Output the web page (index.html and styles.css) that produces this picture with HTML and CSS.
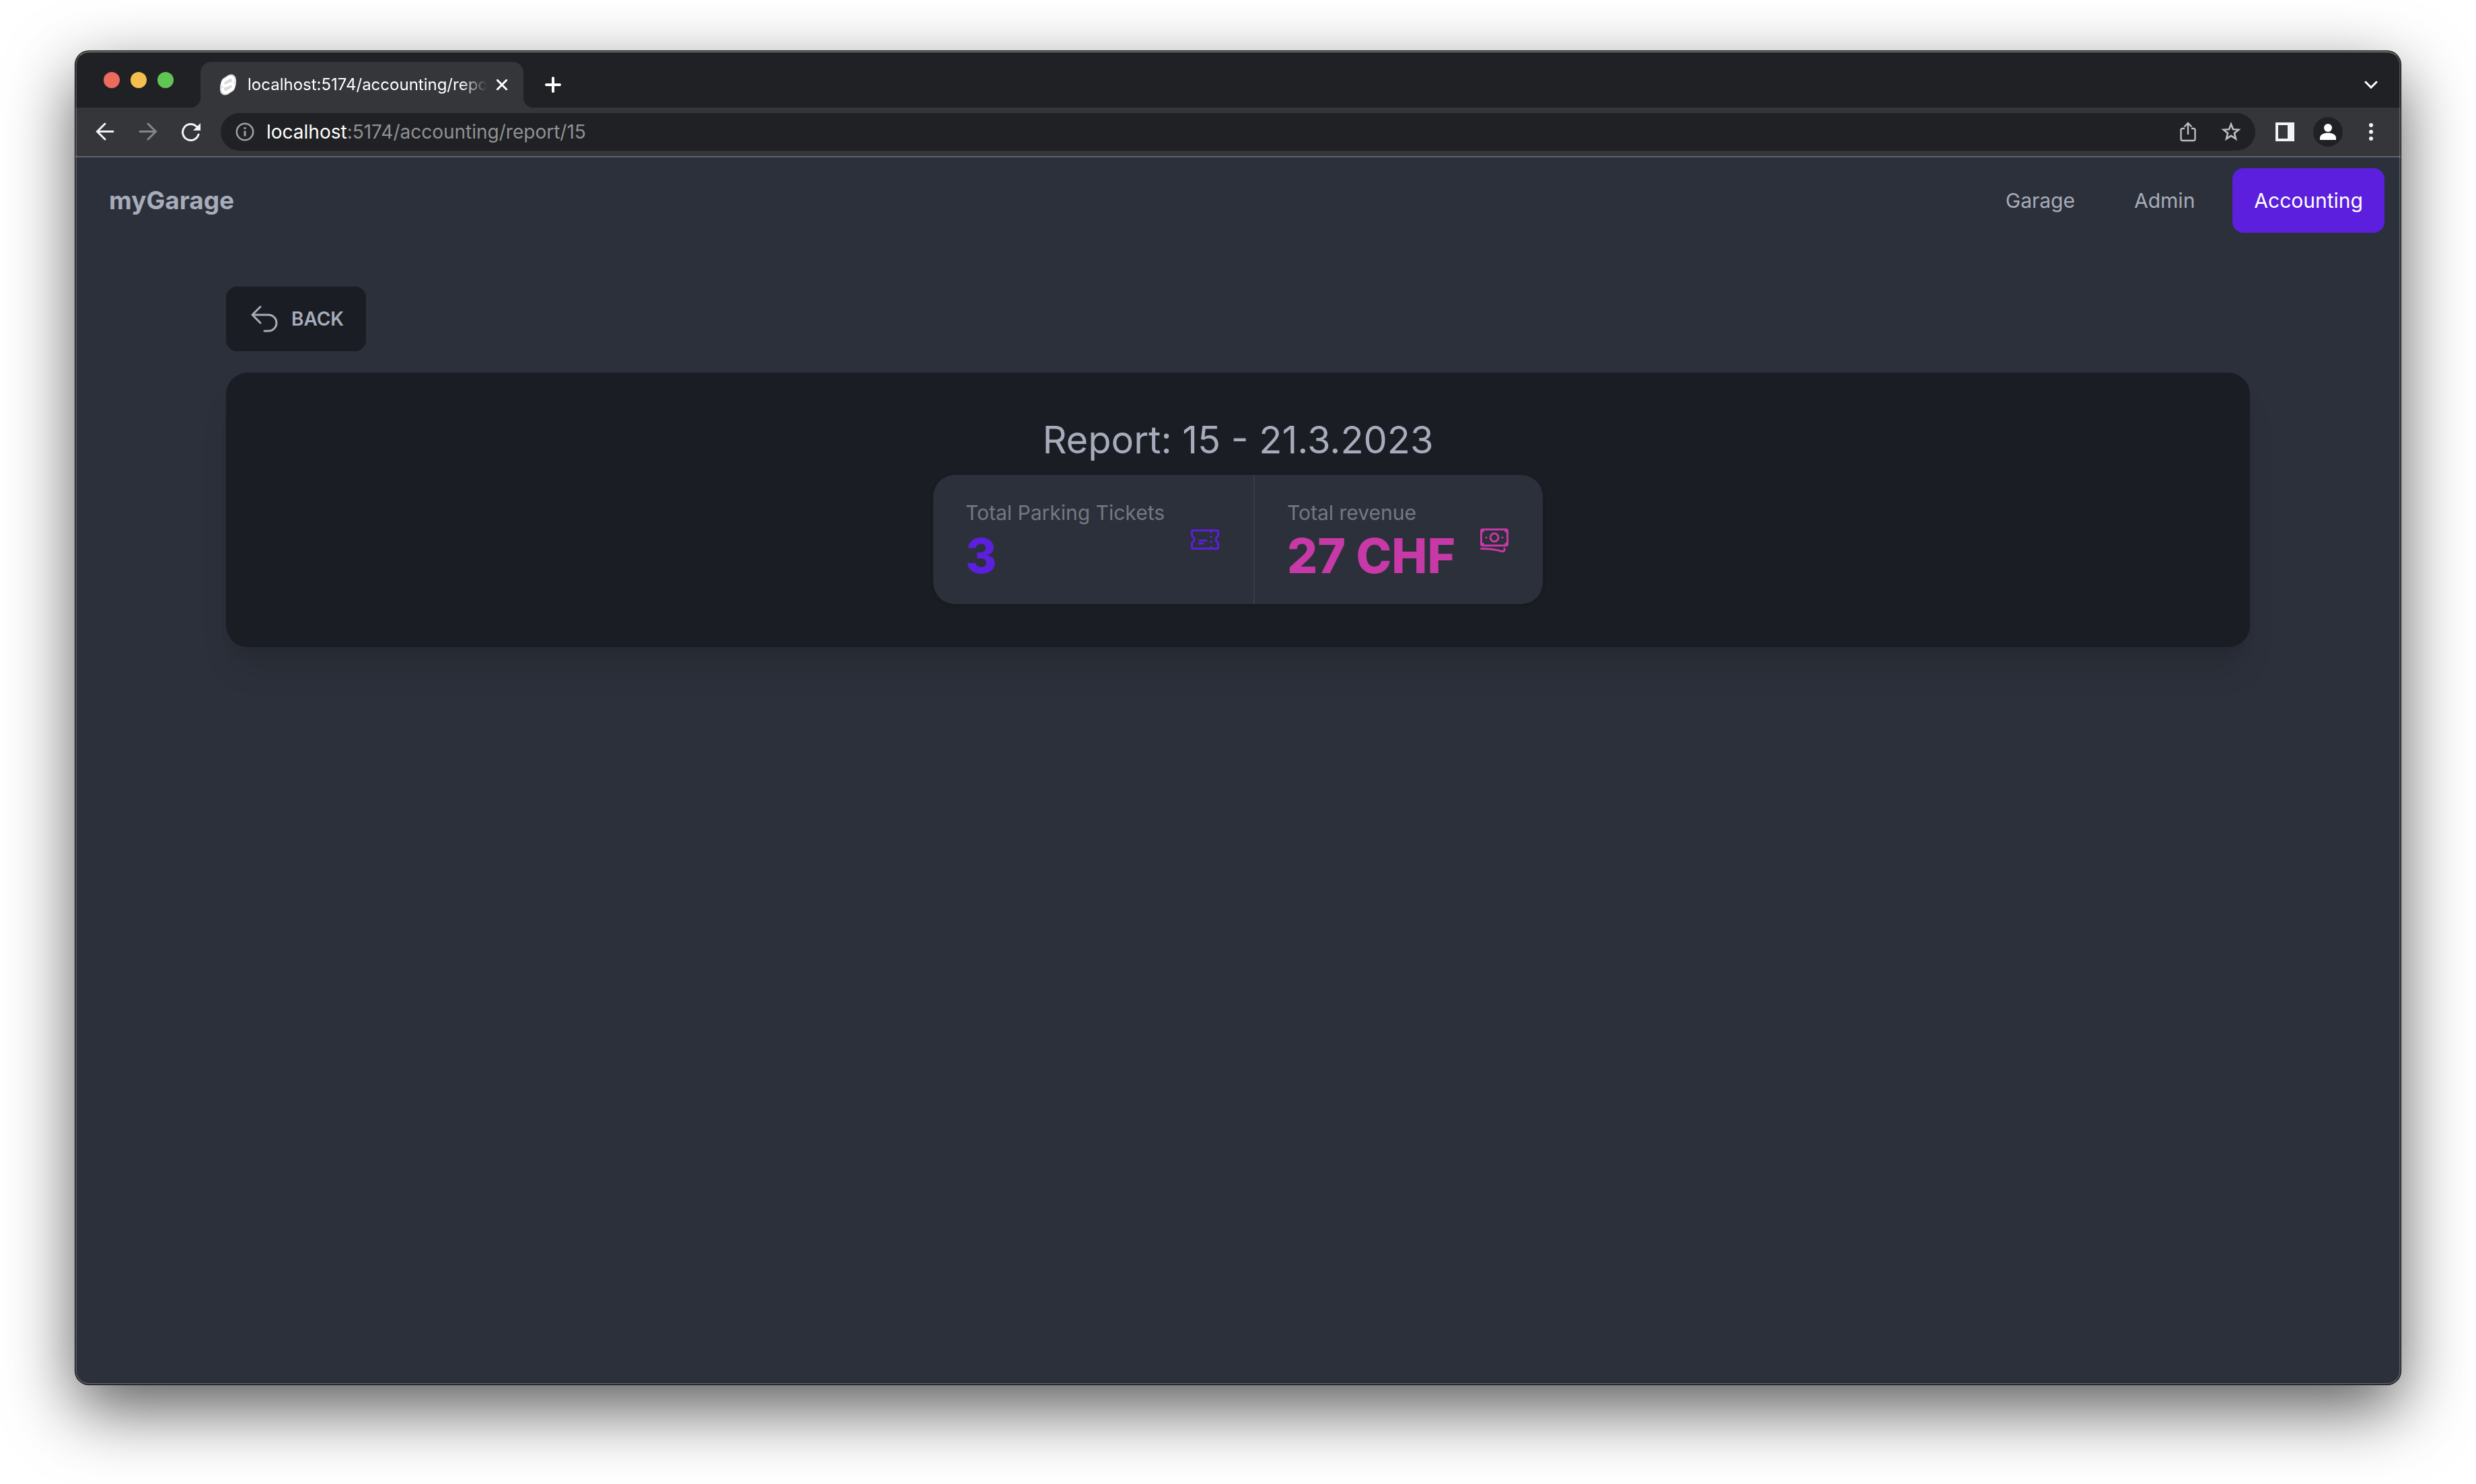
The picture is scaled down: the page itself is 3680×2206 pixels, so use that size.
FILE: index.html
```html
<!DOCTYPE html>
<html lang="en">
<head>
<meta charset="utf-8">
<title>localhost:5174/accounting/report/15</title>
<link rel="stylesheet" href="styles.css">
</head>
<body>
<div class="window">
  <header class="tabstrip">
    <div class="lights">
      <button class="light light-close" aria-label="Close window"></button>
      <button class="light light-min" aria-label="Minimize window"></button>
      <button class="light light-max" aria-label="Zoom window"></button>
    </div>
    <div class="tab">
      <svg class="favicon" viewBox="0 0 26 32" aria-hidden="true">
        <path d="M8 10.500L15.500 5.500Q20 3.500 20.500 9v5L18 21.500 10.500 26.500Q6 28.500 5.500 23v-5z" fill="#d9d9d9" stroke="#d9d9d9" stroke-width="9" stroke-linejoin="round"/>
        <path d="M21 10C21 5 17 3.500 14 5.500L7.500 9.500C3 12.500 4.500 18.500 9.500 17.500L16.500 14.500C21.500 13.500 23 19.500 18.500 22.500L12 26.500C9 28.500 5 27 5 22" fill="none" stroke="#fff" stroke-width="4.500" stroke-linecap="round"/>
      </svg>
      <span class="tab-title">localhost:5174/accounting/report/15</span>
      <button class="icon-btn tab-close" aria-label="Close tab">
        <svg width="16" height="16" viewBox="0 0 16 16"><path d="M1 1l14 14M15 1L1 15" stroke="#fff" stroke-width="3" stroke-linecap="round"/></svg>
      </button>
    </div>
    <button class="icon-btn new-tab" aria-label="New tab">
      <svg width="24" height="24" viewBox="0 0 24 24"><path d="M12 2v20M2 12h20" stroke="#fff" stroke-width="4" stroke-linecap="round"/></svg>
    </button>
    <button class="icon-btn tab-search" aria-label="Search tabs">
      <svg width="20" height="12" viewBox="0 0 20 12"><path d="M2 2l8 8 8-8" fill="none" stroke="#fff" stroke-width="3" stroke-linecap="round"/></svg>
    </button>
  </header>
  <div class="toolbar">
    <div class="nav-buttons">
      <button class="icon-btn" aria-label="Back">
        <svg width="28" height="28" viewBox="0 0 28 28"><path d="M26 13.500H3M14 2L2.500 13.500 14 25" fill="none" stroke="#f1f3f4" stroke-width="3" stroke-linecap="round"/></svg>
      </button>
      <button class="icon-btn" aria-label="Forward">
        <svg width="28" height="28" viewBox="0 0 28 28"><path d="M2 13.500h23M14 2l11.500 11.500L14 25" fill="none" stroke="#85868a" stroke-width="3" stroke-linecap="round"/></svg>
      </button>
      <button class="icon-btn" aria-label="Reload">
        <svg width="28" height="28" viewBox="0 0 28 28"><path d="M25 18a12 12 0 1 1-3-12" fill="none" stroke="#f1f3f4" stroke-width="3" stroke-linecap="round"/><path d="M28 1v11H17z" fill="#f1f3f4"/></svg>
      </button>
    </div>
    <div class="omnibox">
      <svg width="28" height="28" viewBox="0 0 28 28" aria-hidden="true"><circle cx="14" cy="14" r="12.200" fill="none" stroke="#9aa0a6" stroke-width="2.600"/><path d="M14 12.500v8M14 7v3" stroke="#9aa0a6" stroke-width="3"/></svg>
      <span class="url"><span class="url-host">localhost</span>:5174/accounting/report/15</span>
      <button class="icon-btn" aria-label="Share">
        <svg width="24" height="30" viewBox="0 0 24 30"><path d="M7 10H4a2.500 2.500 0 0 0-2.500 2.500v13A2.500 2.500 0 0 0 4 28h16a2.500 2.500 0 0 0 2.500-2.500v-13A2.500 2.500 0 0 0 20 10h-3M12 19V2.500M6.500 7.500L12 2l5.500 5.500" fill="none" stroke="#bdbebf" stroke-width="2.400"/></svg>
      </button>
      <button class="icon-btn" aria-label="Bookmark this tab">
        <svg width="32" height="32" viewBox="0 0 32 32"><path d="M16 4.500l3 7.700 8.300.6-6.400 5.300 2.100 8.200-7-4.400-7 4.400 2.100-8.200-6.400-5.300 8.300-.6z" fill="none" stroke="#bdbebf" stroke-width="2.600"/></svg>
      </button>
    </div>
    <div class="tools">
      <button class="icon-btn" aria-label="Side panel">
        <svg width="28" height="28" viewBox="0 0 28 28"><path d="M0 0h28v28H0zM4 4v20h14V4z" fill="#f1f3f4" fill-rule="evenodd"/></svg>
      </button>
      <button class="icon-btn" aria-label="Profile">
        <svg width="44" height="44" viewBox="0 0 44 44"><circle cx="22" cy="22" r="22" fill="#202124"/><circle cx="22" cy="16" r="6" fill="#fff"/><path d="M10 34v-3c0-5 6-7.500 12-7.500S34 26 34 31v3z" fill="#fff"/></svg>
      </button>
      <button class="icon-btn" aria-label="Menu">
        <svg width="28" height="28" viewBox="0 0 28 28" fill="#f1f3f4"><circle cx="14" cy="4" r="3"/><circle cx="14" cy="14" r="3"/><circle cx="14" cy="24" r="3"/></svg>
      </button>
    </div>
  </div>
  <div class="page">
    <nav class="navbar">
      <a class="brand" href="#">myGarage</a>
      <ul class="menu">
        <li><a class="menu-link" href="#">Garage</a></li>
        <li><a class="menu-link" href="#">Admin</a></li>
        <li><a class="menu-link active" href="#" aria-current="page">Accounting</a></li>
      </ul>
    </nav>
    <main class="content">
      <button class="back">
        <svg width="48" height="48" viewBox="0 0 24 24" fill="none" stroke="currentColor" stroke-width="1.500" stroke-linecap="round" stroke-linejoin="round" aria-hidden="true"><path d="M9 15L3 9m0 0l6-6M3 9h12a6 6 0 0 1 0 12h-3"/></svg>
        Back
      </button>
      <section class="card">
        <h1 class="card-title">Report: 15 - 21.3.2023</h1>
        <div class="stats">
          <div class="stat stat-tickets">
            <div>
              <div class="stat-title">Total Parking Tickets</div>
              <div class="stat-value">3</div>
            </div>
            <svg width="48" height="48" viewBox="0 0 48 48" fill="none" stroke="currentColor" stroke-width="3" stroke-linecap="round" stroke-linejoin="round" aria-hidden="true"><path d="M6 10.500h36a1.500 1.500 0 0 1 1.500 1.500V19q-3.500 2-3.500 5t3.500 5v7a1.500 1.500 0 0 1-1.500 1.500H6A1.500 1.500 0 0 1 4.500 36V29q3.500-2 3.500-5t-3.500-5v-7A1.500 1.500 0 0 1 6 10.500zM15.500 25.500h10.500M15.500 30h6M33 12v1M33 19.500v1M33 27v1M33 35v1"/></svg>
          </div>
          <div class="stat stat-revenue">
            <div>
              <div class="stat-title">Total revenue</div>
              <div class="stat-value">27 CHF</div>
            </div>
            <svg width="48" height="48" viewBox="0 0 24 24" fill="none" stroke="currentColor" stroke-width="1.500" stroke-linecap="round" stroke-linejoin="round" aria-hidden="true"><path d="M2.250 18.750a60.070 60.070 0 0 1 15.797 2.101c.727.198 1.453-.342 1.453-1.096V18.750M3.750 4.500v.750A.750.750 0 0 1 3 6h-.750m0 0v-.375c0-.621.504-1.125 1.125-1.125H20.250M2.250 6v9m18-10.500v.750c0 .414.336.750.750.750h.750m-1.500-1.500h.375c.621 0 1.125.504 1.125 1.125v9.750c0 .621-.504 1.125-1.125 1.125h-.375m1.500-1.500H21a.750.750 0 0 0-.750.750v.750m0 0H3.750m0 0h-.375a1.125 1.125 0 0 1-1.125-1.125V15m1.500 1.500v-.750A.750.750 0 0 0 3 15h-.750M15 10.500a3 3 0 1 1-6 0 3 3 0 0 1 6 0zm3 0h.008v.008H18V10.500zm-12 0h.008v.008H6V10.500z"/></svg>
          </div>
        </div>
      </section>
    </main>
  </div>
</div>
</body>
</html>
```
FILE: styles.css
```css
* { box-sizing: border-box; }

body {
  margin: 0;
  min-height: 100vh;
  display: flex;
  padding: 76px 112px 148px;
  background: #fff;
  color: #a7acba;
  font-family: Inter, "Liberation Sans", sans-serif;
  font-size: 32px;
  line-height: 48px;
}

button { font: inherit; color: inherit; border: 0; padding: 0; background: none; }
a { color: inherit; text-decoration: none; }
svg { display: block; flex: none; }

.window {
  position: relative;
  flex: 1;
  display: flex;
  flex-direction: column;
  border-radius: 20px;
  overflow: hidden;
  background: #2c303a;
  box-shadow: 0 0 0 1px #000, 0 36px 100px rgba(0, 0, 0, 0.65);
}

/* light rim drawn over the window's edge */
.window::after {
  content: "";
  position: absolute;
  inset: 0;
  border: 2px solid rgba(255, 255, 255, 0.2);
  border-top-color: rgba(255, 255, 255, 0.35);
  border-radius: 20px;
  pointer-events: none;
}

.tabstrip {
  display: flex;
  align-items: center;
  height: 84px;
  padding: 16px 34px 0 42px;
  background: #202124;
}

.lights { display: flex; gap: 16px; width: 144px; margin-top: -14px; }
.light { width: 24px; height: 24px; border-radius: 50%; }
.light-close { background: #ed6a5e; }
.light-min { background: #f5bf4f; }
.light-max { background: #61c554; }

.tab {
  position: relative;
  display: flex;
  align-items: center;
  width: 480px;
  height: 68px;
  padding: 0 24px 0 28px;
  border-radius: 16px 16px 0 0;
  background: #35363a;
  color: #fff;
  font-size: 24px;
}

.tab::before,
.tab::after {
  content: "";
  position: absolute;
  bottom: 0;
  width: 16px;
  height: 16px;
}
.tab::before { right: 100%; background: radial-gradient(circle at 0 0, #202124 16px, #35363a 17px); }
.tab::after { left: 100%; background: radial-gradient(circle at 100% 0, #202124 16px, #35363a 17px); }

.favicon { width: 26px; height: 32px; margin-right: 16px; }

.tab-title {
  flex: 1;
  overflow: hidden;
  white-space: nowrap;
  -webkit-mask-image: linear-gradient(to right, #000 316px, transparent 356px);
  mask-image: linear-gradient(to right, #000 316px, transparent 356px);
}

.icon-btn { display: flex; align-items: center; justify-content: center; }
.tab-close { margin-left: 16px; }
.new-tab { margin-left: 32px; }
.tab-search { margin-left: auto; }

.toolbar {
  display: flex;
  align-items: center;
  height: 74px;
  padding: 8px 30px 8px 30px;
  border-bottom: 2px solid #5f6368;
  background: #35363a;
}

.nav-buttons { display: flex; gap: 36px; width: 186px; }

.omnibox {
  flex: 1;
  display: flex;
  align-items: center;
  gap: 36px;
  height: 56px;
  padding: 0 20px 0 22px;
  border-radius: 28px;
  background: #202124;
}

.url { flex: 1; margin-left: -18px; color: #8f9194; font-size: 28px; }
.url-host { color: #fff; }

.tools { display: flex; align-items: center; gap: 28px; margin-left: 30px; }

.navbar {
  display: flex;
  align-items: center;
  justify-content: space-between;
  padding: 16px 24px 16px 50px;
}

.brand { font-size: 37px; font-weight: 700; }

.menu { display: flex; gap: 24px; margin: 0; padding: 0; list-style: none; }
.menu-link { display: block; padding: 24px 32px; border-radius: 16px; font-size: 30px; }
.active { background: #5b1fdd; color: #fff; }

.content { padding: 64px 224px; }

.back {
  display: flex;
  align-items: center;
  gap: 16px;
  height: 96px;
  padding: 0 33px;
  border-radius: 16px;
  background: #1b1d25;
  font-size: 28px;
  font-weight: 600;
  text-transform: uppercase;
}

.card {
  display: flex;
  flex-direction: column;
  align-items: center;
  gap: 16px;
  margin-top: 32px;
  padding: 64px;
  border-radius: 32px;
  background: #1b1d25;
  box-shadow: 0 40px 50px -10px rgba(0, 0, 0, 0.1), 0 16px 20px -12px rgba(0, 0, 0, 0.1);
}

.card-title { margin: 0; font-size: 56px; font-weight: 400; line-height: 72px; }

.stats {
  display: flex;
  border-radius: 32px;
  background: #2c303a;
  box-shadow: 0 2px 6px rgba(0, 0, 0, 0.1), 0 2px 4px rgba(0, 0, 0, 0.06);
}

.stat {
  display: flex;
  align-items: center;
  justify-content: space-between;
  padding: 32px 48px;
}
.stat + .stat { border-left: 2px solid #383c46; }
.stat-tickets { width: 476px; }
.stat-revenue { width: 430px; }

.stat-title { color: #747884; font-size: 30px; white-space: nowrap; }
.stat-value { font-size: 71px; font-weight: 800; line-height: 80px; white-space: nowrap; }
.stat-tickets { color: #5b1fdd; }
.stat-revenue { color: #c639a6; }
```
